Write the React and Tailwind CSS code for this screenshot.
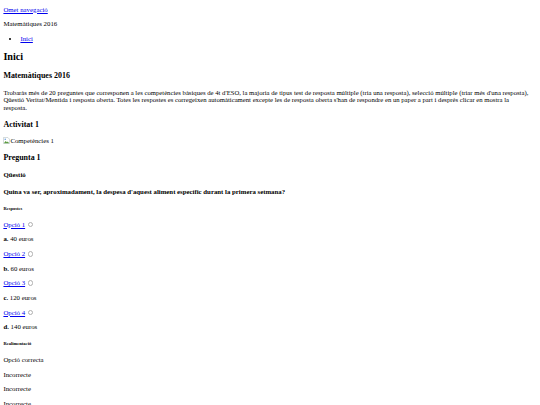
import React from 'react';

const link = 'text-[#0000ee] underline';
const para = 'my-[6.8px] leading-[7.82px]';
const h3 = 'text-[7.96px] leading-[9.14px] font-bold my-[7.96px]';
const h4 = 'text-[6.8px] leading-[7.82px] font-bold my-[9.04px]';
const h6 = 'text-[4.56px] leading-[5.2px] font-bold my-[10px]';

const Radio = () => (
  <span className="inline-block w-[5.4px] h-[5.4px] ml-[1px] rounded-full border-[0.5px] border-[#b0b0b0] bg-white align-[-0.5px]" />
);

const BrokenImage = () => (
  <svg width="7" height="7" viewBox="0 0 16 16" className="inline-block align-[-1px]">
    <path d="M1 1h10l4 4v10H1z" fill="#fff" stroke="#9aa" strokeWidth="1" />
    <path d="M2 14l4-5 3 3 2-2 3 4z" fill="#5a9a3c" />
    <circle cx="5" cy="5" r="1.6" fill="#4a8ad8" />
  </svg>
);

const options = [
  { label: 'Opció 1', letter: 'a.', text: '40 euros' },
  { label: 'Opció 2', letter: 'b.', text: '60 euros' },
  { label: 'Opció 3', letter: 'c.', text: '120 euros' },
  { label: 'Opció 4', letter: 'd.', text: '140 euros' },
];

const feedback = ['Opció correcta', 'Incorrecte', 'Incorrecte', 'Incorrecte'];

export default function App() {
  return (
    <div className="px-[3.4px] pt-[5.8px] bg-white text-black text-[6.8px] font-['Liberation_Serif',serif]">
      <p className="mb-[6.8px] leading-[7.82px]">
        <a href="#" className={link}>Omet navegació</a>
      </p>
      <p className={para}>Matemàtiques 2016</p>
      <ul className="my-[6.8px] leading-[7.82px] pl-[17px] list-disc">
        <li>
          <a href="#" className={link}>Inici</a>
        </li>
      </ul>

      <h2 className="text-[10.2px] leading-[11.7px] font-bold my-[8.47px]">Inici</h2>
      <h3 className={h3}>Matemàtiques 2016</h3>
      <p className={`${para} text-[6.7px]`}>
        Trobaràs més de 20 preguntes que corresponen a les competències bàsiques de 4t d'ESO, la majoria de tipus test de resposta múltiple (tria una resposta), selecció múltiple (triar més d'una resposta), Qüestió Veritat/Mentida i resposta oberta. Totes les respostes es corregeixen automàticament excepte les de resposta oberta s'han de respondre en un paper a part i després clicar en mostra la
        <br />
        resposta.
      </p>

      <h3 className={h3}>Activitat 1</h3>
      <p className={para}>
        <BrokenImage />Competències 1
      </p>

      <h3 className={h3}>Pregunta 1</h3>
      <h4 className={h4}>Qüestió</h4>
      <h4 className={h4}>
        Quina va ser, aproximadament, la despesa d'aquest aliment específic durant la primera setmana?
      </h4>
      <h6 className={h6}>Respostes</h6>

      {options.map((o) => (
        <div key={o.label}>
          <p className={para}>
            <a href="#" className={link}>{o.label}</a> <Radio />
          </p>
          <p className={para}>
            <b>{o.letter}</b> {o.text}
          </p>
        </div>
      ))}

      <h6 className={h6}>Realimentació</h6>
      {feedback.map((f, i) => (
        <p key={i} className={para}>{f}</p>
      ))}
    </div>
  );
}
